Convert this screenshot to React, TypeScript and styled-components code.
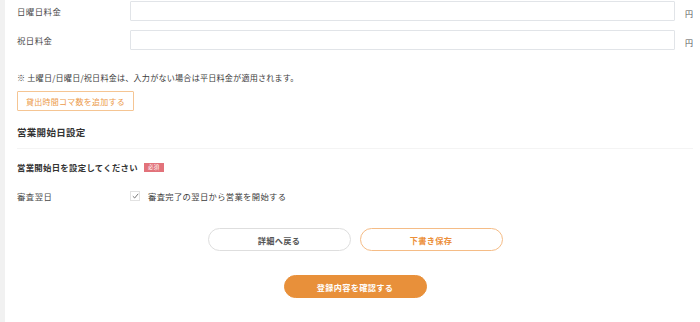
import React from "react";
import styled, { createGlobalStyle } from "styled-components";

const Global = createGlobalStyle`
  html, body { margin: 0; padding: 0; background: #fff; }
  body { font-family: "Noto Sans CJK JP", "Noto Sans", sans-serif; color: #444; }
  * { box-sizing: border-box; }
`;

const Page = styled.div`
  display: flex;
  width: 700px;
  height: 322px;
  overflow: hidden;
`;

const SideStrip = styled.div`
  width: 5px;
  flex: none;
  background: #f1f1f1;
`;

const Content = styled.div`
  flex: 1;
  padding: 1px 7px 0 12px;
  display: flex;
  flex-direction: column;
`;

const FieldRow = styled.div`
  display: flex;
  align-items: center;
  height: 20px;
  margin-bottom: 9px;
`;

const Label = styled.div`
  width: 113px;
  flex: none;
  font-size: 8.4px;
  letter-spacing: 0.5px;
  color: #4a4a4a;
`;

const Input = styled.div`
  flex: 1;
  height: 20px;
  border: 1px solid #e1e4e8;
  border-radius: 1px;
  background: #fff;
`;

const Unit = styled.span`
  width: 18px;
  text-align: right;
  font-size: 8px;
  color: #555;
  padding-top: 5px;
`;

const Note = styled.p`
  margin: 13px 0 0;
  font-size: 8.1px;
  letter-spacing: 0.2px;
  color: #3c3c3c;
`;

const AddButton = styled.button`
  align-self: flex-start;
  margin-top: 8px;
  height: 20px;
  padding: 0 8px;
  border: 1px solid #f5c593;
  background: #fff;
  color: #ec9a4a;
  font-family: inherit;
  font-size: 8px;
  letter-spacing: 0.25px;
  border-radius: 1px;
`;

const SectionTitle = styled.h2`
  margin: 14px 0 0;
  font-size: 9.5px;
  font-weight: 700;
  letter-spacing: 0.3px;
  color: #333;
  padding-bottom: 9px;
  border-bottom: 1px solid #f4f4f4;
`;

const SubTitle = styled.div`
  display: flex;
  align-items: center;
  gap: 6px;
  margin-top: 12px;
  font-size: 8.4px;
  font-weight: 700;
  letter-spacing: 0.3px;
  color: #333;
`;

const Badge = styled.span`
  background: #e2727a;
  color: #fff;
  font-size: 5.5px;
  font-weight: 400;
  padding: 1px 4px;
  line-height: 7px;
`;

const CheckRow = styled.div`
  display: flex;
  align-items: center;
  margin-top: 17px;
`;

const CheckLabel = styled.label`
  display: flex;
  align-items: center;
  gap: 8px;
  font-size: 8.3px;
  letter-spacing: 0.35px;
  color: #3c3c3c;
`;

const Box = styled.span`
  width: 10px;
  height: 10px;
  border: 1px solid #e2e2e2;
  display: flex;
  align-items: center;
  justify-content: center;
`;

const ButtonRow = styled.div`
  display: flex;
  justify-content: center;
  gap: 9px;
  margin-top: 26px;
`;

const Pill = styled.button<{ $variant: "gray" | "outline" | "solid" }>`
  width: 143px;
  height: 23px;
  border-radius: 12px;
  font-family: inherit;
  font-size: 8.2px;
  font-weight: 700;
  letter-spacing: 0.3px;
  border: 1px solid
    ${(p) => (p.$variant === "gray" ? "#dedede" : p.$variant === "outline" ? "#f5bc86" : "#e8903a")};
  background: ${(p) => (p.$variant === "solid" ? "#e8903a" : "#fff")};
  color: ${(p) => (p.$variant === "gray" ? "#555" : p.$variant === "outline" ? "#ec8f3a" : "#fff")};
`;

const SingleRow = styled(ButtonRow)`
  margin-top: 24px;
`;

export default function App() {
  return (
    <>
      <Global />
      <Page>
        <SideStrip />
        <Content>
          <FieldRow>
            <Label>日曜日料金</Label>
            <Input />
            <Unit>円</Unit>
          </FieldRow>
          <FieldRow>
            <Label>祝日料金</Label>
            <Input />
            <Unit>円</Unit>
          </FieldRow>
          <Note>※ 土曜日/日曜日/祝日料金は、入力がない場合は平日料金が適用されます。</Note>
          <AddButton>貸出時間コマ数を追加する</AddButton>
          <SectionTitle>営業開始日設定</SectionTitle>
          <SubTitle>
            営業開始日を設定してください<Badge>必須</Badge>
          </SubTitle>
          <CheckRow>
            <Label>審査翌日</Label>
            <CheckLabel>
              <Box>
                <svg width="7" height="6" viewBox="0 0 7 6">
                  <path d="M0.8 3.2 L2.7 5 L6.2 0.8" fill="none" stroke="#666" strokeWidth="0.9" />
                </svg>
              </Box>
              審査完了の翌日から営業を開始する
            </CheckLabel>
          </CheckRow>
          <ButtonRow>
            <Pill $variant="gray">詳細へ戻る</Pill>
            <Pill $variant="outline">下書き保存</Pill>
          </ButtonRow>
          <SingleRow>
            <Pill $variant="solid">登録内容を確認する</Pill>
          </SingleRow>
        </Content>
      </Page>
    </>
  );
}
